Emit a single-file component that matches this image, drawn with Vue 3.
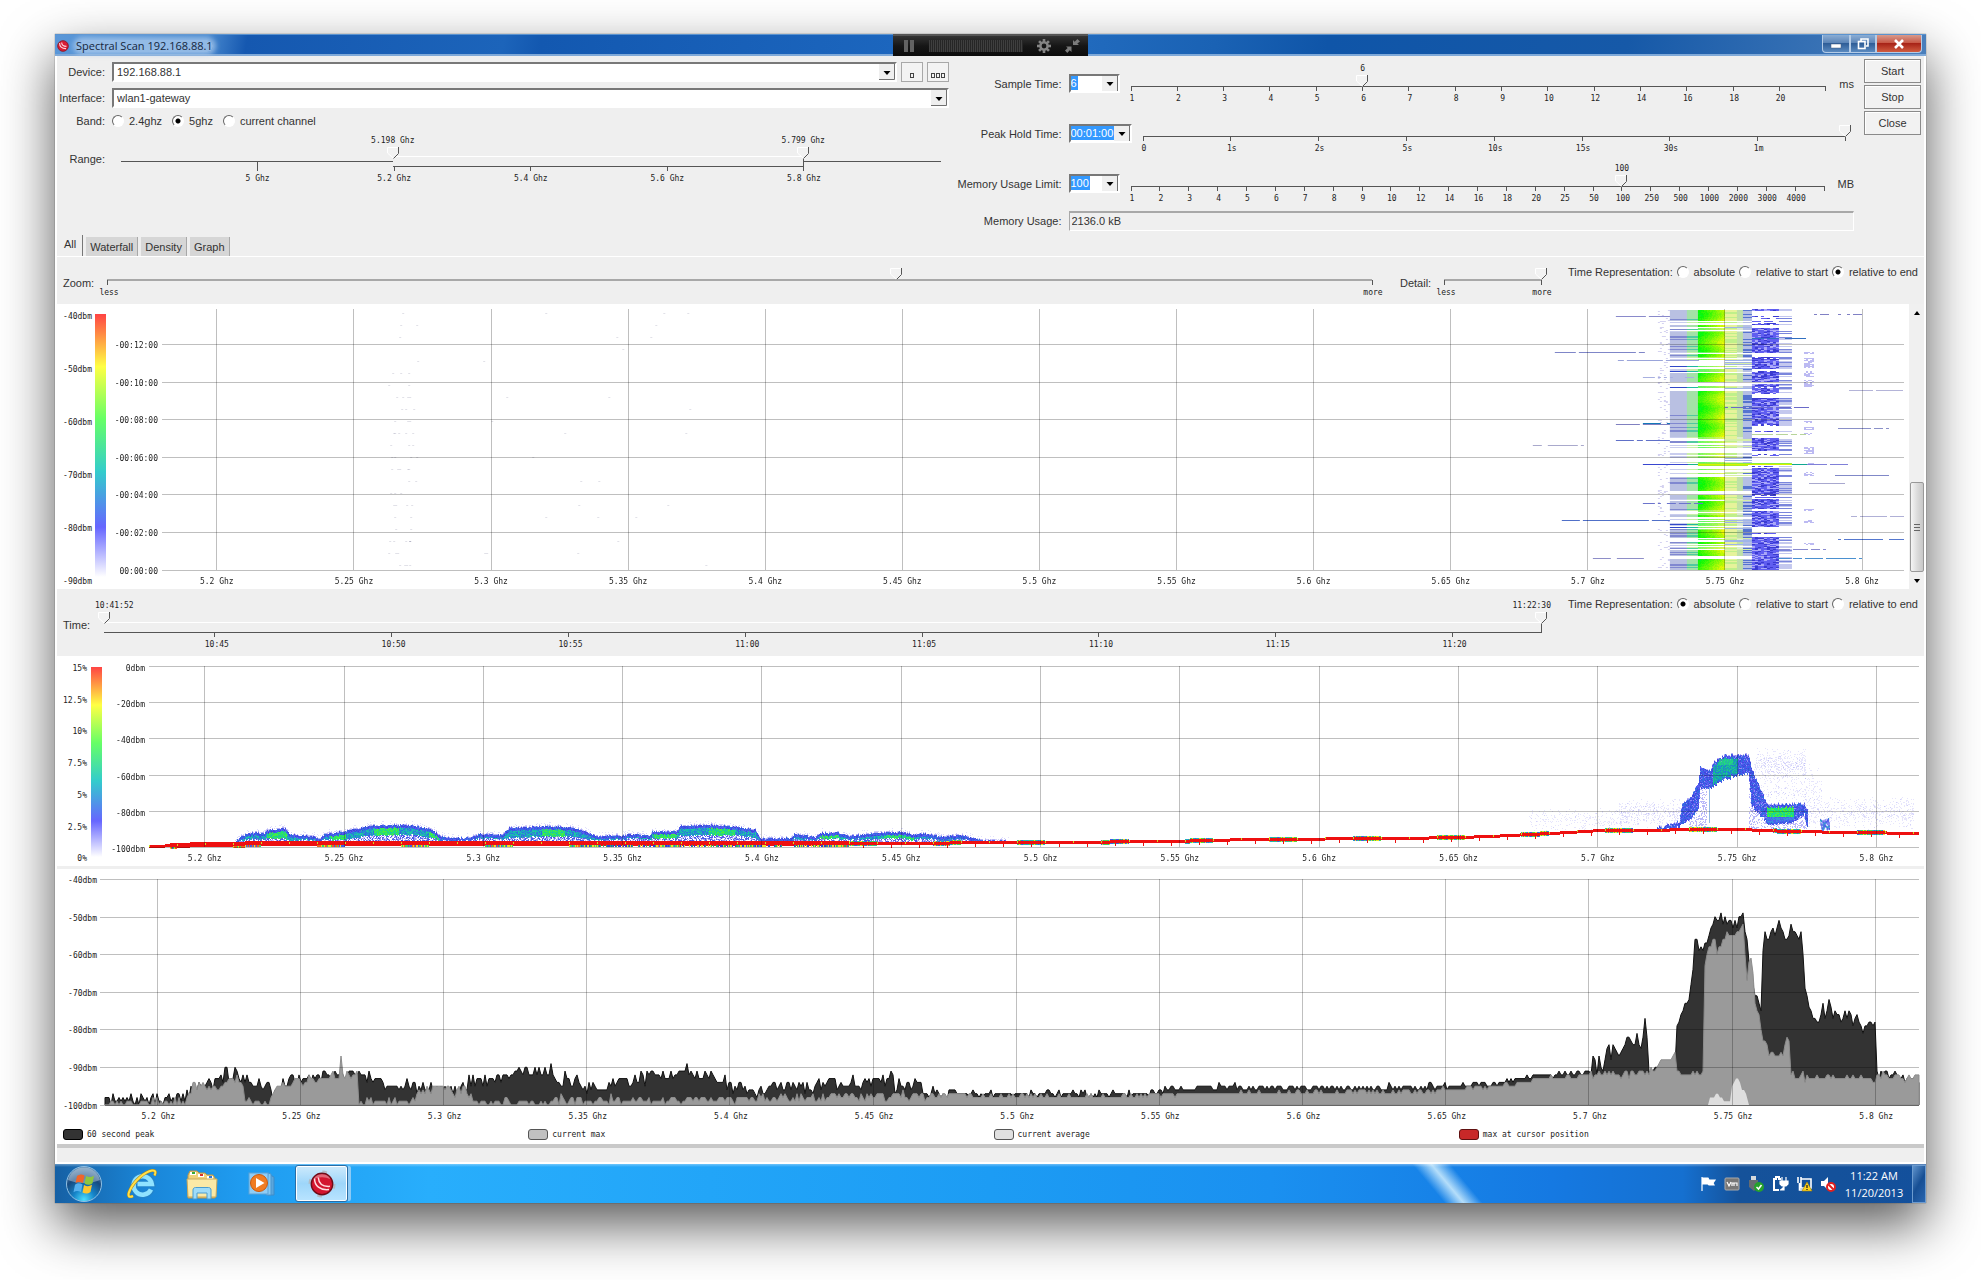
<template>
  <div class="desktop">
    <header class="title-bar">
      <div class="title">
        <svg class="title-logo" viewBox="0 0 14 14">
          <circle cx="7" cy="7" r="6.2" fill="#d81c34" stroke="#8c1420" />
          <path d="M3 3.500c0 4 3 6.500 7.500 6.500M5.500 3c0 3 2.500 4.500 5.500 4.500" fill="none" stroke="#ffd5da" stroke-width="1.300" />
        </svg>
        <h1>Spectral Scan 192.168.88.1</h1>
      </div>

      <div class="recorder">
        <button aria-label="Pause">
          <svg width="12" height="12" viewBox="0 0 12 12"><path d="M1 0h4v12H1zM7 0h4v12H7z" fill="#626262" /></svg>
        </button>
        <div class="recorder-meter"></div>
        <button aria-label="Settings">
          <svg width="14" height="14" viewBox="-7 -7 14 14">
            <rect v-for="n in 8" :key="n" x="-1.300" y="-7" width="2.600" height="4" fill="#858585" :transform="`rotate(${n * 45})`" />
            <circle r="3.600" fill="none" stroke="#858585" stroke-width="2.400" />
          </svg>
        </button>
        <button aria-label="Shrink">
          <svg width="15" height="14" viewBox="0 0 15 14" fill="#7b7b7b">
            <path d="M8 6V1l1.700 1.700L12.400 0 15 2.600l-2.700 2L14 6zM6.500 7.500V13l-1.800-1.800L2.300 14 0 11.500 2.700 9 1 7.500z" />
          </svg>
        </button>
      </div>

      <div class="window-buttons">
        <button class="win-btn win-min" aria-label="Minimize">
          <svg width="12" height="12" viewBox="0 0 12 12"><rect x="1" y="6" width="10" height="4" fill="#fff" stroke="#445d80" stroke-width=".5" /></svg>
        </button>
        <button class="win-btn win-max" aria-label="Restore">
          <svg width="12" height="12" viewBox="0 0 12 12" fill="none" stroke="#fff" stroke-width="1.600">
            <path d="M4 3V1h7v7H9" />
            <rect x="1.500" y="3.500" width="6.500" height="7" />
          </svg>
        </button>
        <button class="win-btn win-close" aria-label="Close window">
          <svg width="12" height="12" viewBox="0 0 12 12"><path d="M2 2l8 8M10 2l-8 8" stroke="#fff" stroke-width="2.600" /></svg>
        </button>
      </div>
    </header>

    <main class="content">
      <section class="controls">
        <div class="source">
          <div class="field-row">
            <label for="device">Device:</label>
            <select id="device" v-model="device">
              <option>192.168.88.1</option>
            </select>
            <button class="mini-btn" aria-label="Add device"><i></i></button>
            <button class="mini-btn" aria-label="Browse devices"><i></i><i></i><i></i></button>
          </div>

          <div class="field-row">
            <label for="interface">Interface:</label>
            <select id="interface" v-model="iface">
              <option>wlan1-gateway</option>
            </select>
          </div>

          <div class="field-row band-row">
            <span class="row-label">Band:</span>
            <label v-for="item in bands" :key="item" class="radio">
              <input type="radio" name="band" :value="item" v-model="band">
              {{ item }}
            </label>
          </div>

          <div class="field-row range-row">
            <span class="row-label">Range:</span>
            <div class="slider range-slider">
              <svg class="ticks" height="50">
                <text :x="rangePct(5.198)" y="9">5.198 Ghz</text>
                <text :x="rangePct(5.799)" y="9">5.799 Ghz</text>
                <line x1="0" :x2="rangePct(5.198)" y1="27" y2="27" />
                <line :x1="rangePct(5.799)" x2="100%" y1="27" y2="27" />
                <line class="light" :x1="rangePct(5.198)" :x2="rangePct(5.799)" y1="22" y2="22" />
                <line :x1="rangePct(5.198)" :x2="rangePct(5.799)" y1="32" y2="32" />
                <line :x1="rangePct(5.799)" :x2="rangePct(5.799)" y1="24" y2="32" />
                <g v-for="f in [5, 5.2, 5.4, 5.6, 5.8]" :key="f">
                  <line :x1="rangePct(f)" :x2="rangePct(f)" :y1="f === 5 ? 27 : 32" y2="37" />
                  <text :x="rangePct(f)" y="47">{{ f }} Ghz</text>
                </g>
              </svg>
              <input type="range" aria-label="Range from" min="4800" max="6000" value="5198">
              <input type="range" aria-label="Range to" min="4800" max="6000" value="5799">
            </div>
          </div>
        </div>

        <div class="limits">
          <div v-for="row in sliders" :key="row.id" class="limit-row">
            <label :for="row.id">{{ row.label }}</label>
            <div class="combo" :class="{ wide: row.wide }">
              <input type="text" :id="row.id" v-model="row.value" :style="{ width: row.textWidth + 'px' }">
              <button :aria-label="row.label + ' options'"></button>
            </div>
            <div class="slider limit-slider">
              <svg class="ticks" height="50">
                <text v-if="row.shown" :x="pct(row.position, row.ticks.length)" y="15">{{ row.value }}</text>
                <line x1="0" x2="100%" y1="30" y2="30" />
                <line v-for="n in row.ticks.length + 1" :key="n" :x1="pct(n - 1, row.ticks.length)" :x2="pct(n - 1, row.ticks.length)" y1="30" y2="35" />
                <text v-for="(tick, i) in row.ticks" :key="tick" :x="pct(i, row.ticks.length)" dx="1" y="45">{{ tick }}</text>
              </svg>
              <input type="range" :aria-label="row.label" min="0" :max="row.ticks.length" :value="row.position">
            </div>
            <span v-if="row.unit" class="unit">{{ row.unit }}</span>
          </div>
          <div class="usage-row">
            <label for="usage">Memory Usage:</label>
            <input id="usage" class="usage" type="text" value="2136.0 kB" readonly>
          </div>
        </div>

        <div class="actions">
          <button v-for="name in ['Start', 'Stop', 'Close']" :key="name" class="action-btn">{{ name }}</button>
        </div>
      </section>

      <nav class="tabs" role="tablist">
        <button v-for="tab in tabs" :key="tab" role="tab" class="tab" :class="{ active: tab === activeTab }" @click="activeTab = tab">{{ tab }}</button>
      </nav>

      <section class="tool-row zoom-row">
        <span class="tool-label">Zoom:</span>
        <div class="slider zoom-slider">
          <svg class="ticks" height="42">
            <line class="thick" x1="0" x2="100%" y1="23" y2="23" />
            <line x1="0" x2="0" y1="23" y2="28" />
            <line x1="100%" x2="100%" y1="23" y2="28" />
            <text x="2" y="38">less</text>
            <text x="100%" dx="1" y="38">more</text>
          </svg>
          <input type="range" aria-label="Zoom" min="0" max="1000" value="624">
        </div>
        <span class="detail-label">Detail:</span>
        <div class="slider zoom-slider detail-slider">
          <svg class="ticks" height="42">
            <line class="thick" x1="0" x2="100%" y1="23" y2="23" />
            <line x1="0" x2="0" y1="23" y2="28" />
            <line x1="100%" x2="100%" y1="23" y2="28" />
            <text x="2" y="38">less</text>
            <text x="100%" dx="1" y="38">more</text>
          </svg>
          <input type="range" aria-label="Detail" min="0" max="10" value="10">
        </div>
        <div class="time-rep">
          <span>Time Representation:</span>
          <label v-for="item in timeModes" :key="item" class="radio">
            <input type="radio" name="waterfall-time" :value="item" v-model="waterfallTime">
            {{ item }}
          </label>
        </div>
      </section>

      <section class="panel waterfall">
        <svg class="scale" height="280">
          <text v-for="(t, i) in ['-40dbm', '-50dbm', '-60dbm', '-70dbm', '-80dbm', '-90dbm']" :key="t" x="100%" :y="10 + i * 53">{{ t }}</text>
        </svg>
        <div class="color-bar"></div>
        <div class="plot">
          <canvas ref="waterfallCanvas" width="1741" height="261"></canvas>
          <svg class="grid" height="280">
            <g v-for="(t, i) in waterfallTimes" :key="t">
              <line x1="0" x2="100%" :y1="gridY(35, i, 37.6)" :y2="gridY(35, i, 37.6)" />
              <text class="y-label" x="-4" :y="gridY(39, i, 37.6)">{{ t }}</text>
            </g>
            <g v-for="f in freqs" :key="f">
              <line :x1="freqPct(f)" :x2="freqPct(f)" y1="0" y2="261" />
              <text :x="freqPct(f)" y="275">{{ f }} Ghz</text>
            </g>
          </svg>
        </div>
        <div class="scrollbar">
          <button aria-label="Scroll up"><svg width="6" height="4" viewBox="0 0 6 4"><path d="M0 4l3-4 3 4z" /></svg></button>
          <div class="scroll-thumb"><i></i><i></i><i></i></div>
          <button aria-label="Scroll down"><svg width="6" height="4" viewBox="0 0 6 4"><path d="M0 0l3 4 3-4z" /></svg></button>
        </div>
      </section>

      <section class="tool-row time-row">
        <span class="tool-label">Time:</span>
        <div class="slider time-slider">
          <svg class="ticks" height="60">
            <text class="start" x="-9" y="19">10:41:52</text>
            <text class="end" x="100%" dx="10" y="19">11:22:30</text>
            <line class="light" x1="0" x2="100%" y1="33" y2="33" />
            <line x1="0" x2="100%" y1="43" y2="43" />
            <line x1="100%" x2="100%" y1="34" y2="44" />
            <g v-for="(t, i) in clockTicks" :key="t">
              <line :x1="clockPct(i)" :x2="clockPct(i)" y1="43" y2="48" />
              <text :x="clockPct(i)" dx="2" y="58">{{ t }}</text>
            </g>
          </svg>
          <input type="range" aria-label="Time from" min="0" max="2438" value="0">
          <input type="range" aria-label="Time to" min="0" max="2438" value="2438">
        </div>
        <div class="time-rep">
          <span>Time Representation:</span>
          <label v-for="item in timeModes" :key="item" class="radio">
            <input type="radio" name="density-time" :value="item" v-model="densityTime">
            {{ item }}
          </label>
        </div>
      </section>

      <section class="panel density">
        <svg class="scale" height="200">
          <text v-for="(t, i) in ['15%', '12.5%', '10%', '7.5%', '5%', '2.5%', '0%']" :key="t" x="100%" :y="gridY(5, i, 31.7)">{{ t }}</text>
        </svg>
        <div class="color-bar"></div>
        <div class="plot">
          <canvas ref="densityCanvas" width="1770" height="184"></canvas>
          <svg class="grid" height="200">
            <g v-for="(t, i) in ['0dbm', '-20dbm', '-40dbm', '-60dbm', '-80dbm', '-100dbm']" :key="t">
              <line x1="0" x2="100%" :y1="gridY(0, i, 36.2)" :y2="gridY(0, i, 36.2)" />
              <text class="y-label" x="-4" :y="gridY(5, i, 36.2)">{{ t }}</text>
            </g>
            <g v-for="f in freqs" :key="f">
              <line :x1="freqPct(f)" :x2="freqPct(f)" y1="0" y2="181" />
              <text :x="freqPct(f)" y="195">{{ f }} Ghz</text>
            </g>
          </svg>
        </div>
      </section>

      <section class="panel graph">
        <div class="plot">
          <svg class="areas" viewBox="0 0 1819 226" preserveAspectRatio="none">
            <path :d="peakPath" fill="#333" stroke="#111" />
            <path :d="maxPath" fill="#9a9a9a" stroke="#8c8c8c" />
            <path :d="averagePath" fill="#dedede" />
          </svg>
          <svg class="grid" height="246">
            <g v-for="(t, i) in ['-40dbm', '-50dbm', '-60dbm', '-70dbm', '-80dbm', '-90dbm', '-100dbm']" :key="t">
              <line x1="0" x2="100%" :y1="gridY(0, i, 37.6)" :y2="gridY(0, i, 37.6)" />
              <text class="y-label" x="-3" :y="gridY(4, i, 37.6)">{{ t }}</text>
            </g>
            <g v-for="f in freqs" :key="f">
              <line :x1="freqPct(f)" :x2="freqPct(f)" y1="0" y2="226" />
              <text :x="freqPct(f)" dx="1" y="240">{{ f }} Ghz</text>
            </g>
          </svg>
        </div>
        <ul class="legend">
          <li v-for="item in legend" :key="item.label"><i :class="item.kind"></i>{{ item.label }}</li>
        </ul>
      </section>

      <footer class="status-bar"></footer>
    </main>

    <footer class="taskbar">
      <button class="task start-orb" aria-label="Start menu">
        <svg width="38" height="38" viewBox="0 0 38 38">
          <defs>
            <radialGradient id="orb" cx=".5" cy=".95" r=".9">
              <stop offset="0" stop-color="#4de0ff" />
              <stop offset=".35" stop-color="#1583c8" />
              <stop offset=".7" stop-color="#174a80" />
              <stop offset="1" stop-color="#5b88b0" />
            </radialGradient>
          </defs>
          <circle cx="19" cy="19" r="17.500" fill="url(#orb)" stroke="#8fc0e4" />
          <path d="M3 15a16.500 16.500 0 0 1 32 0c-9 4-23 4-32 0z" fill="#fff" opacity=".35" />
          <path d="M12 11c3-2 5-2 7.500-.5l-1.500 7.500c-3-1.500-5-1.500-7.500 0z" fill="#f0652a" />
          <path d="M21 11c3 1.500 5 1.500 8-.3l-1.500 7.500c-3 2-5 2-8 .3z" fill="#8fc63f" />
          <path d="M10 19.700c3-2 5-1.700 7.500-.2L16 27c-3-1.500-5-1.500-7.500.3z" fill="#55b0ee" />
          <path d="M19 20c3 1.600 5 1.600 8-.2L25.500 27c-3 2-5 2-8 .5z" fill="#fdc62f" />
        </svg>
      </button>
      <button class="task" aria-label="Internet Explorer">
        <svg width="34" height="34" viewBox="0 0 34 34">
          <path d="M26.500 22.500a9.500 9.500 0 1 1 .8-5.500H12.500" fill="none" stroke="#2384cc" stroke-width="6.500" />
          <path d="M26 22.500a9.200 9.200 0 1 1 .8-5.500H12.500" fill="none" stroke="#8fe2ff" stroke-width="4.500" />
          <path d="M8 29c-5 2.500-5.500-1-3-6C9 14 20 4.500 27 3.500c4-.5 4 2 2.500 5" fill="none" stroke="#b78b12" stroke-width="3" />
          <path d="M8 29c-5 2.500-5.500-1-3-6C9 14 20 4.500 27 3.500c4-.5 4 2 2.500 5" fill="none" stroke="#ffe04a" stroke-width="2" />
        </svg>
      </button>
      <button class="task" aria-label="Windows Explorer">
        <svg width="34" height="34" viewBox="0 0 34 34">
          <path d="M3 8l2-4h7l2 2h6l2 2h6l2 3v20H3z" fill="#f0d27a" stroke="#b8944a" />
          <path d="M5 5h6v3H5zM13 7h6v3h-6zM22 9h6v3h-6z" fill="#fff" />
          <path d="M7 5h3v2H7z" fill="#37a837" />
          <path d="M15 7h3v2h-3z" fill="#d8302a" />
          <path d="M24 9h3v2h-3z" fill="#2f7ad8" />
          <path d="M2 12h30l-1 18H3z" fill="#fbe9a6" stroke="#caa95a" />
          <path d="M8 32v-9c0-1.500 1-2.500 2.500-2.500h13c1.500 0 2.500 1 2.500 2.500v9h-4v-6H12v6z" fill="#9fdcf8" stroke="#4a9dd0" />
        </svg>
      </button>
      <button class="task" aria-label="Media Player">
        <svg width="28" height="26" viewBox="0 0 28 26">
          <path d="M22 4l4 2v18h-6z" fill="#5aa6dc" stroke="#3e8cc8" />
          <path d="M20 2l3 1v21h-5z" fill="#86c8f2" stroke="#4a96cf" />
          <rect x="1" y="2" width="19" height="21" fill="#8fcdf6" stroke="#5ba3d8" />
          <circle cx="11" cy="12" r="8.500" fill="#f07c22" stroke="#c85a10" />
          <path d="M8 7l8.500 5L8 17z" fill="#fff" />
        </svg>
      </button>
      <button class="task task-active" aria-label="Spectral Scan">
        <svg width="28" height="28" viewBox="0 0 30 30">
          <circle cx="15" cy="15" r="13.500" fill="none" stroke="#b4bcc4" stroke-width="2" stroke-dasharray="5 16.200" />
          <circle cx="15" cy="15" r="11.500" fill="#d3152f" stroke="#6f0c18" stroke-width="1.500" />
          <path d="M6 10a9.500 8 0 0 1 18 0c-5-3-13-3-18 0z" fill="#fff" opacity=".35" />
          <path d="M7 9c0 8 6 13 15.500 12M11 8c.5 6.500 5 10 12.500 9.500" fill="none" stroke="#ffdce0" stroke-width="1.600" />
        </svg>
      </button>

      <div class="tray">
        <svg width="16" height="16" viewBox="0 0 16 16"><path d="M2 1v14M3 2h5l1 2h6l-2 3 1 2H9L8 8H3z" fill="#fff" stroke="#fff" stroke-width="1.200" /></svg>
        <svg width="16" height="16" viewBox="0 0 16 16">
          <rect x="1" y="2" width="14" height="12" rx="1" fill="#777" stroke="#aaa" />
          <path d="M3 6l2 4 2-4M8 10V7h2v3V7h3v3" fill="none" stroke="#fff" stroke-width="1.200" />
        </svg>
        <svg width="16" height="16" viewBox="0 0 16 16">
          <path d="M3 0h5v4H3z" fill="#d5d9dd" />
          <path d="M1 4h9v7l-4 4-5-4z" fill="#666c72" />
          <circle cx="11" cy="11" r="5" fill="#25a12c" />
          <path d="M8.500 11l2 2 3-4" fill="none" stroke="#fff" stroke-width="1.500" />
        </svg>
        <svg width="16" height="16" viewBox="0 0 16 16">
          <path d="M7 14H2V3h2V1h3v2h2" fill="none" stroke="#fff" stroke-width="2" />
          <path d="M10 1v4M14 1v4M8 5h8v3l-2 2h-4L8 8zM12 10v4H8" fill="#fff" stroke="#fff" stroke-width="1.200" />
        </svg>
        <svg width="16" height="16" viewBox="0 0 16 16">
          <path d="M5 3h10v9H5zM2 1v6M5 1v4M3.500 7v7h5" fill="none" stroke="#fff" stroke-width="1.600" />
          <path d="M11 6l5 9H6z" fill="#ffd51e" stroke="#a88200" stroke-width=".6" />
          <path d="M11 9v3M11 13v1" stroke="#222" stroke-width="1.300" />
        </svg>
        <svg width="16" height="16" viewBox="0 0 16 16">
          <path d="M1 5h3l4-4v13l-4-4H1z" fill="#fff" />
          <circle cx="11" cy="11" r="4" fill="#fff" stroke="#e02020" stroke-width="2" />
          <path d="M8.500 8.500l5 5" stroke="#e02020" stroke-width="2" />
        </svg>
      </div>
      <div class="clock">
        <span>11:22 AM</span>
        <span>11/20/2013</span>
      </div>
      <button class="show-desktop" aria-label="Show desktop"></button>
    </footer>
  </div>
</template>

<script setup>
import { ref, onMounted } from 'vue'

const device = ref('192.168.88.1')
const iface = ref('wlan1-gateway')

const bands = ['2.4ghz', '5ghz', 'current channel']
const band = ref('5ghz')

const tabs = ['All', 'Waterfall', 'Density', 'Graph']
const activeTab = ref('All')

const timeModes = ['absolute', 'relative to start', 'relative to end']
const waterfallTime = ref('relative to end')
const densityTime = ref('absolute')

const sliders = ref([
  {
    id: 'sample-time',
    label: 'Sample Time:',
    value: '6',
    textWidth: 7,
    shown: true,
    position: 5,
    unit: 'ms',
    ticks: [1, 2, 3, 4, 5, 6, 7, 8, 9, 10, 12, 14, 16, 18, 20]
  },
  {
    id: 'peak-hold',
    label: 'Peak Hold Time:',
    value: '00:01:00',
    textWidth: 43,
    wide: true,
    position: 8,
    ticks: ['0', '1s', '2s', '5s', '10s', '15s', '30s', '1m']
  },
  {
    id: 'memory-limit',
    label: 'Memory Usage Limit:',
    value: '100',
    textWidth: 19,
    shown: true,
    position: 17,
    unit: 'MB',
    ticks: [1, 2, 3, 4, 5, 6, 7, 8, 9, 10, 12, 14, 16, 18, 20, 25, 50, 100, 250, 500, 1000, 2000, 3000, 4000]
  }
])

const legend = [
  { label: '60 second peak', kind: 'peak' },
  { label: 'current max', kind: 'max' },
  { label: 'current average', kind: 'average' },
  { label: 'max at cursor position', kind: 'cursor' }
]

const freqs = [5.2, 5.25, 5.3, 5.35, 5.4, 5.45, 5.5, 5.55, 5.6, 5.65, 5.7, 5.75, 5.8]
const waterfallTimes = ['-00:12:00', '-00:10:00', '-00:08:00', '-00:06:00', '-00:04:00', '-00:02:00', '00:00:00']
const clockTicks = ['10:45', '10:50', '10:55', '11:00', '11:05', '11:10', '11:15', '11:20']

const pct = (i, count) => (i / count) * 100 + '%'
const rangePct = (f) => ((f - 4.8) / 1.2) * 100 + '%'
const freqPct = (f) => ((f - 5.18) / 0.6353) * 100 + '%'
// the time axis covers 2438 seconds, the first tick is 188 seconds in
const clockPct = (i) => ((188 + i * 300) / 2438) * 100 + '%'
const gridY = (top, i, step) => top + Math.round(i * step)

// small seeded generator so the noise is the same on every load
const makeRandom = (seed) => () => {
  seed = (seed * 1664525 + 1013904223) % 4294967296
  return seed / 4294967296
}

const interpolate = (points, x) => {
  if (x <= points[0][0]) return points[0].slice(1)
  for (let i = 1; i < points.length; i++) {
    if (x <= points[i][0]) {
      const a = points[i - 1]
      const b = points[i]
      const t = (x - a[0]) / (b[0] - a[0] || 1)
      return a.slice(1).map((v, k) => v + (b[k + 1] - v) * t)
    }
  }
  return points[points.length - 1].slice(1)
}

// ---- graph: [x, dBm] envelopes
const peak = [
  [5, -99], [84, -98.5], [94, -95], [120, -94], [124, -91.5], [138, -91.5], [148, -94], [170, -94], [173, -98],
  [185, -94], [220, -92.5], [255, -91.5], [284, -94], [319, -95.5], [359, -96], [370, -94], [393, -92.5],
  [416, -91], [451, -91], [457, -95], [465, -93], [480, -94.5], [503, -95.5], [525, -93.5], [554, -92],
  [594, -91.5], [617, -93], [652, -96], [657, -97], [669, -95], [715, -95], [729, -93], [744, -94.5],
  [790, -93.5], [801, -96], [815, -94], [824, -96], [860, -97], [1050, -97], [1068, -95.5], [1138, -95],
  [1160, -95.5], [1300, -95.5], [1352, -95], [1403, -94], [1438, -92], [1492, -91.5], [1493, -88],
  [1497, -91], [1499, -87], [1503, -91], [1507, -84], [1511, -89], [1513, -84.5], [1519, -88], [1524, -83],
  [1530, -82], [1534, -85], [1537, -81.5], [1541, -86], [1543, -83], [1545, -76], [1549, -91.5],
  [1562, -91], [1575, -90], [1576, -78.5], [1582, -76], [1589, -72], [1593, -65], [1595, -55], [1603, -59],
  [1610, -53.5], [1617, -50.5], [1629, -51], [1634, -52.5], [1643, -50], [1646, -55], [1650, -62],
  [1653, -68], [1660, -73.5], [1662, -73], [1663, -58], [1665, -54], [1669, -57], [1673, -53], [1675, -56],
  [1679, -51], [1686, -58], [1691, -52], [1695, -55], [1701, -55], [1705, -68], [1710, -74], [1713, -76],
  [1718, -79], [1722, -75], [1727, -74], [1734, -76], [1748, -76], [1753, -78], [1757, -75.5], [1761, -78.5],
  [1770, -78], [1775, -79.5], [1777, -92], [1819, -92.8]
]

const currentMax = [
  [5, -99.5], [84, -99], [94, -95], [120, -95], [138, -92.5], [143, -95], [144, -99.5], [170, -99.5],
  [173, -96.5], [185, -94.5], [220, -93], [239, -92], [241, -87], [243, -92], [258, -92], [259, -99.5],
  [313, -99], [320, -96.5], [350, -95], [355, -97], [365, -95.5], [371, -98], [374, -99.3], [480, -98.8],
  [652, -98.5], [750, -97.8], [860, -97.5], [1000, -97.8], [1138, -96.8], [1300, -96.5], [1352, -96],
  [1403, -95], [1438, -93.3], [1492, -92], [1540, -91.5], [1555, -91], [1562, -87.5], [1575, -87.5],
  [1577, -91.5], [1603, -91.5], [1604, -64], [1609, -59], [1614, -54.5], [1617, -60], [1624, -55],
  [1631, -55.5], [1637, -53.5], [1643, -52], [1647, -67], [1650, -60], [1653, -66], [1655, -74],
  [1659, -77], [1663, -83], [1670, -86], [1678, -86], [1683, -87], [1686, -82], [1689, -82], [1691, -92.5],
  [1819, -92.8]
]

const average = [
  [1608, -100], [1610, -98.5], [1617, -97.5], [1624, -98.5], [1631, -98.5], [1632, -95.5], [1639, -92.5],
  [1642, -96], [1646, -97], [1649, -100]
]

const buildArea = (points, noise, seed) => {
  const random = makeRandom(seed)
  const from = points[0][0]
  const to = points[points.length - 1][0]
  let d = `M${from} 226`
  for (let x = from; x <= to; x += 2) {
    const quiet = x > 850 && x < 1490 ? 0.45 : 1
    const spike = random() > 0.85 ? 1.8 : 1
    const db = Math.round(interpolate(points, x)[0] + (random() - 0.5) * noise * quiet * spike)
    const y = Math.min(226, ((-40 - db) / 60) * 226)
    d += `L${x} ${y.toFixed(1)}`
  }
  return d + `L${to} 226Z`
}

const peakPath = buildArea(peak, 3, 7)
const maxPath = buildArea(currentMax, 2, 21)
const averagePath = buildArea(average, 1, 3)

// ---- waterfall
const waterfallCanvas = ref(null)
const densityCanvas = ref(null)

const inside = (ranges, y) => ranges.some(([a, b]) => y >= a && y < b)

const strongRows = [[1, 12], [16, 18], [23, 43], [45, 48], [64, 73], [82, 128], [168, 182], [186, 190], [192, 201], [206, 208], [221, 229], [233, 235], [241, 247], [250, 261]]
const blueRows = [[0, 2], [19, 44], [50, 60], [63, 73], [75, 78], [79, 84], [89, 115], [129, 142], [159, 185], [190, 200], [202, 218], [228, 261]]
const sideRows = [[43, 45], [49, 59], [62, 68], [71, 78], [112, 114], [118, 121], [124, 126], [138, 145], [154, 156], [163, 167], [200, 202], [211, 214], [234, 236]]

const streaks = [
  [7, 1453, 1507, '#8a8acb'], [43, 1392, 1480, '#7f86c8'], [51, 1455, 1535, '#9aa4da'], [68, 1480, 1530, '#a8b0e0'],
  [114, 1480, 1507, '#1478b8'], [115, 1453, 1507, '#8080c0'], [131, 1453, 1507, '#6070c8'], [136, 1370, 1424, '#a9a9cc'],
  [155, 1480, 1530, '#4545d8'], [194, 1480, 1540, '#6c74cc'], [211, 1399, 1507, '#5070c8'], [249, 1430, 1480, '#8e8ec8'],
  [5, 1645, 1698, '#8080c4'], [29, 1589, 1643, '#306ec0'], [81, 1686, 1740, '#b4b4d8'], [119, 1672, 1726, '#8a90c8'],
  [166, 1672, 1726, '#8088c8'], [174, 1646, 1682, '#a8a8cf'], [207, 1688, 1740, '#b0b0d6'], [230, 1672, 1739, '#5578cf'],
  [240, 1615, 1672, '#8a8acf'], [249, 1615, 1699, '#4a90d0'], [125, 1589, 1643, '#b7d49a'], [98, 1562, 1645, '#6a6ac8'],
  [155, 1643, 1688, '#8080d8']
]

const drawWaterfall = () => {
  const ctx = waterfallCanvas.value.getContext('2d')
  const random = makeRandom(11)
  const bar = (x, y, w, color) => {
    ctx.fillStyle = color
    ctx.fillRect(x, y, w, 1)
  }

  for (let y = 0; y < 261; y++) {
    const strong = inside(strongRows, y)
    const lit = strong || random() > 0.62
    if (lit) {
      const paleEnd = strong || random() > 0.35
      if (paleEnd) {
        bar(1507, y, 17, strong ? '#b9c0e2' : '#c9cdee')
        bar(1524, y, 11, strong ? '#a3e2a6' : '#c8f0a8')
        if (random() > 0.85) {
          bar(1507, y, 17, '#8088d0')
          bar(1524, y, 11, '#50c8a0')
        }
      } else if (random() > 0.7) {
        bar(1507, y, 17, '#3048c8')
        bar(1524, y, 11, '#20b8a0')
      }
      for (let x = 1535; x < 1562; x++) {
        const t = (x - 1535) / 27
        const hue = 118 - t * 48 + (random() - 0.5) * 12 + Math.sin(y / 3) * 8
        bar(x, y, 1, strong ? `hsl(${hue}, 95%, 50%)` : `hsl(${hue}, 90%, ${68 - t * 4}%)`)
      }
      bar(1562, y, 12, random() > 0.3 ? '#e6f39a' : '#bff08a')
      bar(1574, y, 6, strong ? '#bfe0a8' : '#dcebd0')
      bar(1580, y, 9, random() > 0.3 ? '#b5bfe4' : '#5573d0')
    } else if (random() > 0.75) {
      bar(1562, y, 27, random() > 0.5 ? '#d6efa8' : '#9fb4e8')
    }

    // second transmitter, broken into short blue dashes
    const dense = inside(blueRows, y)
    if (dense || random() > 0.72) {
      for (let x = 1589; x < 1616; x += 3) {
        if (random() > (dense ? 0.25 : 0.4)) bar(x, y, 3, random() > 0.7 ? '#3a3ad0' : '#605ef0')
        else if (dense) bar(x, y, 3, '#aaa8f8')
      }
      if (random() > 0.35) bar(1616, y, 13, random() > 0.6 ? '#7a86dc' : '#c4c8ee')
    }

    for (let x = 1495; x < 1507; x += 2) {
      if (random() > 0.9) bar(x, y, 2, '#d4d2f0')
    }
    if (inside(sideRows, y)) {
      for (let x = 1641; x < 1650; x += 2) {
        if (random() > 0.3) bar(x, y, 2, '#bcbaf2')
      }
    }
  }

  streaks.forEach(([y, from, to, color]) => {
    for (let x = from; x < to; x += 3) {
      if (random() > 0.15) bar(x, y, 3, color)
    }
  })

  // one wide burst across both channels
  bar(1480, 155, 45, '#3846d0')
  bar(1525, 155, 12, '#18b48c')
  bar(1535, 154, 94, '#8cf03c')
  bar(1535, 155, 94, '#d8f000')
  bar(1535, 156, 50, '#a8ee20')
  bar(1629, 155, 15, '#10a890')

  // weak traces around 5.27 Ghz
  for (let i = 0; i < 90; i++) {
    const center = random() > 0.3 ? 241 : 320 + random() * 240
    ctx.fillStyle = 'rgba(120, 120, 150, .22)'
    ctx.fillRect(Math.floor(center + (random() - 0.5) * 30), Math.floor(random() * 22) * 12 + 4, 2, 1)
  }
}

// ---- density: [x, top, height]
const humps = [
  [86, 176, 0], [92, 170, 5], [101, 167, 7], [115, 167, 7], [120, 164, 9], [136, 162, 11], [140, 168, 8],
  [150, 170, 5], [164, 170, 5], [170, 173, 3], [176, 168, 6], [196, 165, 9], [221, 160, 10], [246, 159, 11],
  [261, 159, 10], [281, 163, 9], [292, 170, 5], [296, 172, 3], [321, 172, 3], [330, 168, 5], [352, 169, 5],
  [360, 162, 10], [401, 160, 11], [426, 162, 9], [440, 167, 7], [446, 170, 5], [471, 170, 4], [485, 168, 5],
  [500, 170, 5], [503, 166, 7], [528, 165, 8], [531, 160, 10], [561, 159, 11], [586, 161, 9], [606, 164, 9],
  [612, 173, 3], [641, 172, 3], [645, 168, 6], [666, 171, 4], [672, 167, 6], [691, 167, 7], [700, 170, 4],
  [731, 167, 7], [751, 166, 7], [765, 169, 6], [771, 167, 6], [791, 171, 4], [811, 169, 5], [831, 174, 1],
  [860, 175, 0]
]

const greenHumps = [[118, 138], [181, 197], [225, 250], [280, 290], [393, 416], [505, 528], [560, 586], [671, 691], [735, 765]]

const tower = [
  [1507, 162, 2], [1530, 156, 5], [1533, 138, 20], [1543, 130, 22], [1549, 116, 26], [1551, 101, 21],
  [1561, 104, 17], [1564, 97, 24], [1575, 90, 24], [1588, 89, 20], [1599, 89, 18], [1602, 101, 36],
  [1607, 114, 32], [1616, 134, 20], [1618, 138, 20], [1644, 138, 18], [1655, 138, 10], [1658, 144, 18]
]

const floor = [
  [0, 180], [30, 179], [51, 178], [140, 177], [620, 177], [700, 177], [900, 176], [1020, 175], [1100, 173],
  [1250, 172], [1308, 171], [1340, 170], [1380, 168], [1420, 166], [1451, 164], [1590, 163], [1640, 165],
  [1770, 167]
]

const drawDensity = () => {
  const ctx = densityCanvas.value.getContext('2d')
  const random = makeRandom(5)
  const dot = (x, y, color, w = 1, h = 1) => {
    ctx.fillStyle = color
    ctx.fillRect(x, y, w, h)
  }
  const blues = ['#4355ea', '#2f6fe0', '#5a5df0', '#3f48dc']
  const pick = (list) => list[Math.floor(random() * list.length)]

  for (let x = 86; x < 860; x++) {
    const [top, height] = interpolate(humps, x)
    const start = Math.round(top + (random() - 0.5) * 1.6)
    const green = inside(greenHumps, x)
    for (let y = start; y < 177; y++) {
      const depth = y - start
      if (depth < 3) dot(x, y, pick(blues))
      else if (depth < height - 1) dot(x, y, green ? pick(['#25e070', '#46f03c', '#1cc8a0']) : pick(['#18b4b8', '#2098cc', '#2f6fe0', '#20c8a0']))
      else if (random() > 0.35) dot(x, y, pick(['#9a98f2', '#5a62e8', '#c8c6fa', '#4355ea']))
    }
    if (random() > 0.4) dot(x, start - 1, '#b4b2f6')
    if (random() > 0.7) dot(x, start - 2, '#d2d0fa')
    if (random() > 0.85) dot(x, start - 4, '#e2e1fc')
  }

  for (let x = 1507; x < 1659; x++) {
    const [top, height] = interpolate(tower, x)
    const start = Math.round(top + (random() - 0.5) * 3)
    for (let y = start; y < start + height; y++) {
      const core = y - start > 2 && y - start < height - 2
      const teal = x > 1563 && x < 1589
      const green = x > 1617 && x < 1645
      let color = pick(blues)
      if (core && green) color = y < 151 ? pick(['#20e070', '#58f030', '#18d898']) : pick(['#3a8ce0', '#4c5cf0'])
      else if (core && teal) color = pick(['#189cc0', '#1aa8a0', '#2080d0', '#16c890'])
      else if (random() > 0.9) color = '#8e8cf4'
      dot(x, y, color)
    }
    if (random() > 0.4) dot(x, start - 1, '#b2b0f8')
    if (inside([[1540, 1558], [1600, 1658]], x)) {
      for (let y = start + Math.round(height); y < 163; y++) {
        if (random() > 0.65) dot(x, y, '#b9b7f9')
      }
    }
  }
  dot(1560, 121, '#8fb8e4', 1, 36)
  dot(1570, 93, 'rgba(40, 240, 110, .5)', 14, 6)

  for (let i = 0; i < 90; i++) dot(1671 + random() * 9, 152 + random() * 12, pick(['#5058e8', '#30a0d0', '#8f90f4']), 1, 2)

  // scattered halo round the two peaks
  const scatter = (count, x, y, w, h) => {
    for (let i = 0; i < count; i++) {
      const bell = (random() + random()) / 2
      dot(Math.floor(x + random() * w), Math.floor(y + bell * h), 'rgba(130, 125, 240, .2)')
    }
  }
  scatter(500, 1605, 82, 52, 34)
  scatter(110, 1655, 96, 18, 60)
  scatter(420, 1470, 132, 62, 30)
  scatter(260, 1380, 142, 100, 24)
  scatter(600, 1657, 130, 108, 34)
  scatter(160, 1605, 110, 52, 30)

  // noise floor
  for (let x = 0; x < 1770; x++) {
    const [y] = interpolate(floor, x)
    const base = Math.round(y)
    const segment = Math.floor(x / 28)
    if (x > 20 && x < 700) {
      dot(x, base - 2, '#ee1010', 1, 5)
      if (segment % 3 === 0) dot(x, base + 2, pick(['#f0e020', '#40d060', '#f06020', '#4060e0']), 1, 2)
      if (x > 430 && random() > 0.4) dot(x, base + 2, pick(['#3040d0', '#30b060', '#e8e030']), 1, 2)
    } else {
      if (segment % 3 === 1) dot(x, base - 2, pick(['#f0e020', '#50d840', '#20b0c0', '#4060e0']), 1, 5)
      dot(x, base - 1, '#ee1010', 1, 3)
    }
    if (x % 28 === 0) dot(x, base - 1, '#c8e020', 1, 2)
    if (x % 28 === 14 && x > 700) dot(x, base, '#ee1010', 1, 5)
  }
}

onMounted(() => {
  drawWaterfall()
  drawDensity()
})
</script>

<style>
body {
  margin: 0;
  background: #fff;
}
</style>

<style scoped>
.desktop {
  margin: 34px 55px 77px;
  background: #fff;
  box-shadow: 0 22px 50px rgba(0, 0, 0, 0.65), 0 0 1px rgba(0, 0, 0, 0.6);
  font-family: "Liberation Sans", Arial, sans-serif;
  font-size: 11px;
  line-height: 14px;
  color: #333;
}

button,
input,
select {
  font: inherit;
  color: inherit;
  margin: 0;
  padding: 0;
  border: none;
  background: none;
  border-radius: 0;
}

/* title bar */
.title-bar {
  display: grid;
  grid-template-columns: 1fr auto 1fr;
  height: 22px;
  box-sizing: border-box;
  border-top: 1px solid #5b93cf;
  border-bottom: 2px solid #7fa9d8;
  background: linear-gradient(100deg, #5a97d8 0, #4a8ad0 150px, #1558b0 190px, #1c64ba 24%, #1358b0 26%, #1c66be 45%, #2670c4 50%, #1a62b4 62%, #0f55a8 68%, #1659a8 84%, #4a7fbc 100%);
}

.title {
  display: flex;
  align-items: center;
  gap: 7px;
  padding-left: 2px;
}

.title-logo {
  width: 12px;
  height: 14px;
}

.title h1 {
  margin: 0;
  font: 11px/12px "Open Sans", "Noto Sans", sans-serif;
  color: #14263c;
  background: rgba(175, 205, 238, 0.7);
  border-radius: 6px;
  box-shadow: 0 0 5px 3px rgba(175, 205, 238, 0.7);
}

.recorder {
  display: flex;
  align-items: center;
  gap: 14px;
  width: 195px;
  height: 22px;
  margin-top: -1px;
  padding: 0 8px 0 10px;
  box-sizing: border-box;
  border-top: 2px solid #555;
  background: linear-gradient(#333, #161616 50%, #0c0c0c);
}

.recorder button,
.recorder svg {
  display: block;
}

.recorder-meter {
  flex: 1;
  height: 12px;
  background: repeating-linear-gradient(90deg, #3f3f3f 0 1px, #262626 1px 2px);
}

.window-buttons {
  display: flex;
  justify-content: flex-end;
  margin-right: 4px;
}

.win-btn {
  display: flex;
  align-items: center;
  justify-content: center;
  height: 18px;
  box-sizing: border-box;
  border: 1px solid #b5cce6;
  border-top: none;
  background: linear-gradient(#8badd4, #5d86b8 45%, #2f5e98 50%, #5a8ac0);
}

.win-min {
  width: 28px;
  border-radius: 0 0 0 4px;
}

.win-max {
  width: 26px;
}

.win-close {
  width: 46px;
  border-radius: 0 0 4px 0;
  background: linear-gradient(#d89a8c, #c85a48 45%, #a82418 50%, #d05c40);
}

/* content */
.content {
  margin: 0 2px;
  background: #efefef;
}

.controls {
  display: grid;
  grid-template-columns: minmax(0, 1fr) minmax(0, 1fr) 70px;
}

.source {
  padding: 6px 7px 0 0;
}

.field-row {
  display: flex;
  align-items: center;
  height: 20px;
  margin-bottom: 6px;
}

.field-row > label:first-child,
.row-label {
  width: 48px;
  margin-right: 7px;
  text-align: right;
  flex-shrink: 0;
}

select {
  flex: 1;
  min-width: 0;
  height: 20px;
  box-sizing: border-box;
  padding-left: 3px;
  appearance: none;
  border: 2px solid #787878;
  border-right-color: #fff;
  border-bottom-color: #fff;
  background-color: #fff;
  background-image: url("data:image/svg+xml,%3Csvg xmlns='http://www.w3.org/2000/svg' width='16' height='16'%3E%3Crect width='16' height='16' fill='%23efefef'/%3E%3Cpath d='M15.500 0v15.500H0' fill='none' stroke='%23707070'/%3E%3Cpath d='M4.500 7h7L8 11z'/%3E%3C/svg%3E");
  background-position: right center;
  background-repeat: no-repeat;
}

.mini-btn {
  display: flex;
  align-items: flex-end;
  justify-content: center;
  gap: 1px;
  width: 22px;
  height: 20px;
  margin-left: 4px;
  padding-bottom: 3px;
  box-sizing: border-box;
  border: 1px solid #a8a8a8;
  background: #f3f3f3;
}

.mini-btn i {
  width: 2px;
  height: 3px;
  border: 1px solid #444;
}

.field-row.band-row {
  height: 14px;
  margin-bottom: 6px;
}

.radio {
  display: flex;
  align-items: center;
  white-space: nowrap;
}

.band-row .radio {
  margin-right: 10px;
}

.radio input {
  width: 12px;
  height: 12px;
  box-sizing: border-box;
  margin-right: 5px;
  appearance: none;
  border: 1px solid #666;
  border-right-color: #fff;
  border-bottom-color: #fff;
  border-radius: 50%;
  background: #fff;
}

.radio input:checked {
  background: radial-gradient(circle, #000 0 2px, #fff 3px);
}

/* sliders */
.slider {
  display: grid;
  flex: 1;
  min-width: 0;
}

.slider > * {
  grid-area: 1 / 1;
}

svg {
  display: block;
  overflow: visible;
}

.ticks,
.grid,
.scale {
  width: 100%;
  font-family: "DejaVu Sans Mono", monospace;
  font-size: 8px;
}

.ticks line {
  stroke: #555;
  shape-rendering: crispEdges;
}

.ticks .light {
  stroke: #fff;
}

.ticks .thick {
  stroke: #a8a8a8;
  stroke-width: 2px;
}

.ticks text,
.grid text {
  text-anchor: middle;
  fill: #222;
}

.ticks .start {
  text-anchor: start;
}

.ticks .end,
.grid .y-label,
.scale text {
  text-anchor: end;
}

.slider input {
  appearance: none;
  align-self: start;
  width: calc(100% + 12px);
  height: 12px;
  margin: 0 -6px;
  pointer-events: none;
}

.slider input::-webkit-slider-thumb {
  appearance: none;
  width: 12px;
  height: 12px;
  pointer-events: auto;
  background: url("data:image/svg+xml,%3Csvg xmlns='http://www.w3.org/2000/svg' width='12' height='12'%3E%3Cpath d='M.5 .5h11v6L6.500 11.500.5 6z' fill='%23f2f2f2' stroke='%23fff'/%3E%3Cpath d='M11.500 0v6.500L6.500 11.500' fill='none' stroke='%23555'/%3E%3C/svg%3E");
}

.field-row.range-row {
  height: 50px;
  margin: 0;
}

.range-slider {
  margin: 0 8px 0 9px;
}

.range-slider input {
  margin-top: 13px;
}

.limit-slider input {
  margin-top: 19px;
}

.zoom-slider input {
  margin-top: 11px;
}

.time-slider input {
  margin-top: 23px;
}

/* limits */
.limit-row,
.usage-row {
  display: flex;
  align-items: center;
  height: 50px;
}

.limit-row label,
.usage-row label {
  width: 106px;
  margin-right: 7px;
  text-align: right;
  white-space: nowrap;
}

.limit-row > label,
.unit {
  padding-top: 5px;
}

.combo {
  display: flex;
  justify-content: space-between;
  width: 51px;
  height: 19px;
  margin: 4px 11px 0 0;
  box-sizing: border-box;
  border: 2px solid #787878;
  border-right-color: #fff;
  border-bottom-color: #fff;
  background: #fff;
}

.combo.wide {
  width: 63px;
}

.combo input {
  height: 14px;
  background: #3399ff;
  color: #fff;
}

.combo button {
  width: 16px;
  background: url("data:image/svg+xml,%3Csvg xmlns='http://www.w3.org/2000/svg' width='16' height='16'%3E%3Crect width='16' height='16' fill='%23efefef'/%3E%3Cpath d='M15.500 0v15.500H0' fill='none' stroke='%23707070'/%3E%3Cpath d='M4.500 6h7L8 10z'/%3E%3C/svg%3E");
}

.unit {
  margin-left: 14px;
}

.limit-row:nth-child(2) .limit-slider {
  margin-right: 9px;
}

.usage-row {
  height: 29px;
}

.usage {
  flex: 1;
  height: 20px;
  box-sizing: border-box;
  padding-left: 2px;
  border: 1px solid #a8a8a8;
  border-top-width: 2px;
  border-right-color: #fff;
  border-bottom-color: #fff;
}

.actions {
  display: flex;
  flex-direction: column;
  gap: 2px;
  padding: 3px 3px 0 10px;
}

.action-btn {
  height: 24px;
  border: 1px solid #8a8a8a;
  background: #f2f2f2;
  box-shadow: inset 1px 1px #fff;
}

/* tabs */
.tabs {
  display: flex;
  align-items: flex-end;
  gap: 2px;
  height: 21px;
  border-bottom: 1px solid #fff;
}

.tab {
  height: 19px;
  padding: 0 4px;
  background: #d6d6d6;
  border-right: 1px solid #a8a8a8;
  border-left: 1px solid #eee;
}

.tab.active {
  height: 21px;
  padding: 0 6px 4px;
  background: #efefef;
  border-right: 1px solid #777;
}

/* tool rows */
.tool-row {
  display: flex;
  align-items: flex-start;
}

.zoom-row {
  height: 47px;
}

.time-row {
  height: 67px;
}

.tool-label {
  width: 44px;
  padding: 19px 0 0 6px;
}

.time-row .tool-label {
  width: 41px;
  padding-top: 29px;
}

.detail-label {
  width: 30px;
  margin: 0 14px 0 28px;
  padding-top: 19px;
}

.detail-slider {
  flex: 0 0 97px;
}

.time-rep {
  display: flex;
  justify-content: space-between;
  width: 350px;
  margin: 8px 6px 0 27px;
  white-space: nowrap;
}

/* charts */
.panel {
  display: flex;
  background: #fff;
}

.plot {
  display: grid;
  flex: 1;
  min-width: 0;
  align-items: start;
}

.plot > * {
  grid-area: 1 / 1;
}

.plot canvas {
  display: block;
  width: 100%;
}

.grid line {
  stroke: rgba(0, 0, 0, 0.25);
  shape-rendering: crispEdges;
}

.scale text {
  fill: #222;
}

.color-bar {
  width: 11px;
  margin-left: 3px;
  background: linear-gradient(#f44, #ff4 20%, #6f6 40%, #3cc 60%, #66f 81%, #fff);
}

.waterfall {
  height: 285px;
}

.waterfall .scale {
  width: 35px;
  margin-top: 5px;
  flex-shrink: 0;
}

.waterfall .color-bar {
  height: 263px;
  margin-top: 10px;
}

.waterfall .plot {
  margin: 5px 5px 0 56px;
}

.waterfall canvas {
  height: 261px;
}

.scrollbar {
  display: flex;
  flex-direction: column;
  align-items: center;
  width: 15px;
  background: #f0f0f0;
}

.scrollbar button {
  display: flex;
  align-items: center;
  justify-content: center;
  height: 17px;
}

.scroll-thumb {
  display: flex;
  flex-direction: column;
  align-items: center;
  justify-content: center;
  gap: 1px;
  width: 12px;
  height: 88px;
  margin-top: auto;
  border: 1px solid #989898;
  border-radius: 2px;
  background: linear-gradient(90deg, #f5f5f5, #dcdcdc 50%, #c8c8c8);
}

.scroll-thumb i {
  width: 6px;
  height: 1px;
  border-bottom: 1px solid #666;
}

.density {
  height: 210px;
  border-bottom: 3px solid #efefef;
}

.density .scale {
  width: 30px;
  margin-top: 10px;
  flex-shrink: 0;
}

.density .color-bar {
  height: 190px;
  margin-top: 11px;
  margin-left: 4px;
}

.density .plot {
  margin: 10px 5px 0 47px;
}

.density canvas {
  height: 184px;
}

.graph {
  flex-direction: column;
  padding-top: 10px;
}

.graph .plot {
  flex: none;
  margin: 0 5px 0 43px;
}

.areas {
  width: 100%;
  height: 226px;
}

.legend {
  display: grid;
  grid-template-columns: repeat(4, 1fr);
  align-items: center;
  height: 19px;
  margin: 0;
  padding: 0 0 0 6px;
  list-style: none;
  font-family: "DejaVu Sans Mono", monospace;
  font-size: 8px;
  color: #222;
}

.legend li {
  display: flex;
  align-items: center;
  gap: 4px;
}

.legend i {
  width: 18px;
  height: 9px;
  border: 1px solid #555;
  border-radius: 3px;
}

.legend .peak {
  background: #333;
  border-color: #000;
}

.legend .max {
  background: #c0c0c0;
}

.legend .average {
  background: #e0e0e0;
}

.legend .cursor {
  background: #c82828;
  border-color: #601010;
}

.status-bar {
  height: 14px;
  border-top: 4px solid #c9c9c9;
  border-bottom: 2px solid #fff;
}

/* taskbar */
.taskbar {
  display: flex;
  align-items: center;
  height: 39px;
  background:
    linear-gradient(rgba(255, 255, 255, 0.35), transparent 3px),
    linear-gradient(50deg, transparent 73%, rgba(220, 245, 255, 0.8) 74%, transparent 75%),
    linear-gradient(90deg, #1660a4, #1a86d8 5%, #1f9cf0 10%, #28aefc 20%, #1c9cf4 50%, #1a90f0 65%, #1579e2 80%, #1570d0 87%, #15529a 90%, #13509c 100%);
}

.task {
  display: flex;
  align-items: center;
  justify-content: center;
  width: 60px;
  height: 38px;
}

.start-orb {
  width: 57px;
}

.task-active {
  width: 53px;
  height: 37px;
  margin-left: 3px;
  border: 1px solid #2a6da4;
  border-radius: 3px;
  background: linear-gradient(#cdeafc, #9ed6fa 50%, #b9e4ff);
  box-shadow: inset 0 0 0 1px #fff, 4px 0 0 -1px #8ccaf5;
}

.tray {
  display: flex;
  gap: 8px;
  margin-left: auto;
}

.clock {
  display: flex;
  flex-direction: column;
  align-items: center;
  width: 76px;
  font: 11px/17px "Open Sans", "Noto Sans", sans-serif;
  color: #fff;
}

.show-desktop {
  width: 14px;
  height: 38px;
  box-sizing: border-box;
  border: 1px solid #6c9bcf;
  background: linear-gradient(120deg, #5f93cc, #174f94 50%, #2a66b0);
}
</style>
